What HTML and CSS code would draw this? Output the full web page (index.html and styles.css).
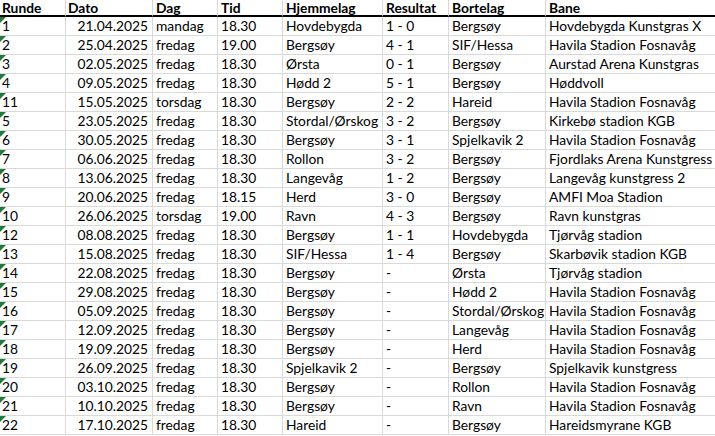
FILE: index.html
```html
<!DOCTYPE html>
<html lang="no">
<head>
<meta charset="utf-8">
<title>Terminliste</title>
<link rel="stylesheet" href="styles.css">
</head>
<body>
<div class="sheet">
  <div class="row head">
    <div class="c c1">Runde</div><div class="c c2">Dato</div><div class="c c3">Dag</div><div class="c c4">Tid</div><div class="c c5">Hjemmelag</div><div class="c c6">Resultat</div><div class="c c7">Bortelag</div><div class="c c8">Bane</div>
  </div>
  <div class="row"><div class="c c1 txt">1</div><div class="c c2">21.04.2025</div><div class="c c3">mandag</div><div class="c c4">18.30</div><div class="c c5">Hovdebygda</div><div class="c c6">1 - 0</div><div class="c c7">Bergsøy</div><div class="c c8">Hovdebygda Kunstgras X</div></div>
  <div class="row"><div class="c c1 txt">2</div><div class="c c2">25.04.2025</div><div class="c c3">fredag</div><div class="c c4">19.00</div><div class="c c5">Bergsøy</div><div class="c c6">4 - 1</div><div class="c c7">SIF/Hessa</div><div class="c c8">Havila Stadion Fosnavåg</div></div>
  <div class="row"><div class="c c1 txt">3</div><div class="c c2">02.05.2025</div><div class="c c3">fredag</div><div class="c c4">18.30</div><div class="c c5">Ørsta</div><div class="c c6">0 - 1</div><div class="c c7">Bergsøy</div><div class="c c8">Aurstad Arena Kunstgras</div></div>
  <div class="row"><div class="c c1 txt">4</div><div class="c c2">09.05.2025</div><div class="c c3">fredag</div><div class="c c4">18.30</div><div class="c c5">Hødd 2</div><div class="c c6">5 - 1</div><div class="c c7">Bergsøy</div><div class="c c8">Høddvoll</div></div>
  <div class="row"><div class="c c1 txt">11</div><div class="c c2">15.05.2025</div><div class="c c3">torsdag</div><div class="c c4">18.30</div><div class="c c5">Bergsøy</div><div class="c c6">2 - 2</div><div class="c c7">Hareid</div><div class="c c8">Havila Stadion Fosnavåg</div></div>
  <div class="row"><div class="c c1 txt">5</div><div class="c c2">23.05.2025</div><div class="c c3">fredag</div><div class="c c4">18.30</div><div class="c c5">Stordal/Ørskog</div><div class="c c6">3 - 2</div><div class="c c7">Bergsøy</div><div class="c c8">Kirkebø stadion KGB</div></div>
  <div class="row"><div class="c c1 txt">6</div><div class="c c2">30.05.2025</div><div class="c c3">fredag</div><div class="c c4">18.30</div><div class="c c5">Bergsøy</div><div class="c c6">3 - 1</div><div class="c c7">Spjelkavik 2</div><div class="c c8">Havila Stadion Fosnavåg</div></div>
  <div class="row"><div class="c c1 txt">7</div><div class="c c2">06.06.2025</div><div class="c c3">fredag</div><div class="c c4">18.30</div><div class="c c5">Rollon</div><div class="c c6">3 - 2</div><div class="c c7">Bergsøy</div><div class="c c8">Fjordlaks Arena Kunstgress</div></div>
  <div class="row"><div class="c c1 txt">8</div><div class="c c2">13.06.2025</div><div class="c c3">fredag</div><div class="c c4">18.30</div><div class="c c5">Langevåg</div><div class="c c6">1 - 2</div><div class="c c7">Bergsøy</div><div class="c c8">Langevåg kunstgress 2</div></div>
  <div class="row"><div class="c c1 txt">9</div><div class="c c2">20.06.2025</div><div class="c c3">fredag</div><div class="c c4">18.15</div><div class="c c5">Herd</div><div class="c c6">3 - 0</div><div class="c c7">Bergsøy</div><div class="c c8">AMFI Moa Stadion</div></div>
  <div class="row"><div class="c c1 txt">10</div><div class="c c2">26.06.2025</div><div class="c c3">torsdag</div><div class="c c4">19.00</div><div class="c c5">Ravn</div><div class="c c6">4 - 3</div><div class="c c7">Bergsøy</div><div class="c c8">Ravn kunstgras</div></div>
  <div class="row"><div class="c c1 txt">12</div><div class="c c2">08.08.2025</div><div class="c c3">fredag</div><div class="c c4">18.30</div><div class="c c5">Bergsøy</div><div class="c c6">1 - 1</div><div class="c c7">Hovdebygda</div><div class="c c8">Tjørvåg stadion</div></div>
  <div class="row"><div class="c c1 txt">13</div><div class="c c2">15.08.2025</div><div class="c c3">fredag</div><div class="c c4">18.30</div><div class="c c5">SIF/Hessa</div><div class="c c6">1 - 4</div><div class="c c7">Bergsøy</div><div class="c c8">Skarbøvik stadion KGB</div></div>
  <div class="row"><div class="c c1 txt">14</div><div class="c c2">22.08.2025</div><div class="c c3">fredag</div><div class="c c4">18.30</div><div class="c c5">Bergsøy</div><div class="c c6">-</div><div class="c c7">Ørsta</div><div class="c c8">Tjørvåg stadion</div></div>
  <div class="row"><div class="c c1 txt">15</div><div class="c c2">29.08.2025</div><div class="c c3">fredag</div><div class="c c4">18.30</div><div class="c c5">Bergsøy</div><div class="c c6">-</div><div class="c c7">Hødd 2</div><div class="c c8">Havila Stadion Fosnavåg</div></div>
  <div class="row"><div class="c c1 txt">16</div><div class="c c2">05.09.2025</div><div class="c c3">fredag</div><div class="c c4">18.30</div><div class="c c5">Bergsøy</div><div class="c c6">-</div><div class="c c7">Stordal/Ørskog</div><div class="c c8">Havila Stadion Fosnavåg</div></div>
  <div class="row"><div class="c c1 txt">17</div><div class="c c2">12.09.2025</div><div class="c c3">fredag</div><div class="c c4">18.30</div><div class="c c5">Bergsøy</div><div class="c c6">-</div><div class="c c7">Langevåg</div><div class="c c8">Havila Stadion Fosnavåg</div></div>
  <div class="row"><div class="c c1 txt">18</div><div class="c c2">19.09.2025</div><div class="c c3">fredag</div><div class="c c4">18.30</div><div class="c c5">Bergsøy</div><div class="c c6">-</div><div class="c c7">Herd</div><div class="c c8">Havila Stadion Fosnavåg</div></div>
  <div class="row"><div class="c c1 txt">19</div><div class="c c2">26.09.2025</div><div class="c c3">fredag</div><div class="c c4">18.30</div><div class="c c5">Spjelkavik 2</div><div class="c c6">-</div><div class="c c7">Bergsøy</div><div class="c c8">Spjelkavik kunstgress</div></div>
  <div class="row"><div class="c c1 txt">20</div><div class="c c2">03.10.2025</div><div class="c c3">fredag</div><div class="c c4">18.30</div><div class="c c5">Bergsøy</div><div class="c c6">-</div><div class="c c7">Rollon</div><div class="c c8">Havila Stadion Fosnavåg</div></div>
  <div class="row"><div class="c c1 txt">21</div><div class="c c2">10.10.2025</div><div class="c c3">fredag</div><div class="c c4">18.30</div><div class="c c5">Bergsøy</div><div class="c c6">-</div><div class="c c7">Ravn</div><div class="c c8">Havila Stadion Fosnavåg</div></div>
  <div class="row"><div class="c c1 txt">22</div><div class="c c2">17.10.2025</div><div class="c c3">fredag</div><div class="c c4">18.30</div><div class="c c5">Hareid</div><div class="c c6">-</div><div class="c c7">Bergsøy</div><div class="c c8">Hareidsmyrane KGB</div></div>
</div>
</body>
</html>
```
FILE: styles.css
```css
html, body {
  margin: 0;
  padding: 0;
  background: #ffffff;
  overflow: hidden;
}
.sheet {
  width: 715px;
  font-family: Lato, "Liberation Sans", sans-serif;
  font-size: 13.8px;
  color: #000000;
}
.row {
  display: grid;
  grid-template-columns: 66px 87px 65px 65px 100px 66px 97px 169px;
  height: 19px;
}
.row.head {
  height: 17px;
  font-weight: bold;
}
.c {
  box-sizing: border-box;
  border-right: 1px solid #d9d9d9;
  border-bottom: 1px solid #d9d9d9;
  padding: 0 2px 0 3px;
  white-space: nowrap;
  overflow: hidden;
  line-height: 18px;
  position: relative;
}
.head .c {
  border-bottom: 2px solid #000000;
  line-height: 15px;
}
.c1 { padding-left: 2px; }
.c2 { text-align: right; padding-right: 4px; }
.head .c2 { text-align: left; padding-left: 2px; }
.c8 { border-right: none; }
.txt::before {
  content: "";
  position: absolute;
  left: 0;
  top: 0;
  width: 0;
  height: 0;
  border-top: 6px solid #1e7b3c;
  border-right: 6px solid transparent;
}
```
